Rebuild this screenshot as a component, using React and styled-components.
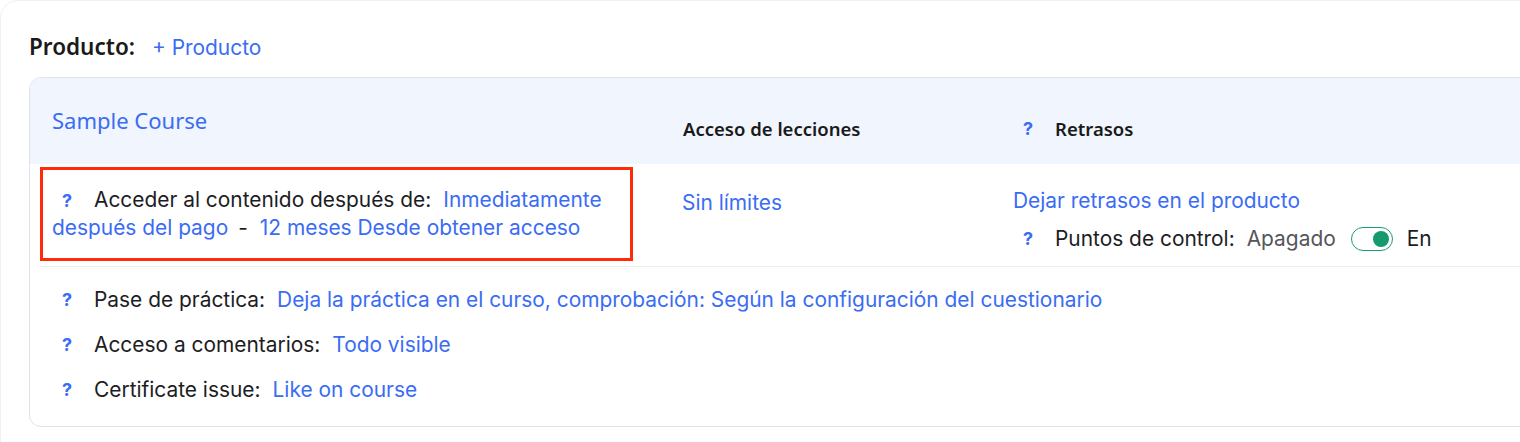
import React from "react";
import styled, { createGlobalStyle } from "styled-components";

const Global = createGlobalStyle`
  html, body { margin: 0; padding: 0; background: #fff; overflow: hidden; }
  body { font-family: Inter, "Noto Sans", sans-serif; color: #1d1d1f; }
`;

const BLUE = "#3a6cf4";
const TEXT_SIZE = 20.9;

const Frame = styled.div`
  width: 100%;
  height: 442px;
  overflow: hidden;
  box-sizing: border-box;
  border: 1px solid #f1f1f3;
  border-right: 0;
  border-bottom: 0;
  border-top-left-radius: 18px;
  padding: 30px 0 0 28px;
`;

const TitleRow = styled.div`
  display: flex;
  align-items: baseline;
  gap: 17px;
  height: 28px;
`;

const Title = styled.span`
  font-family: "Noto Sans", sans-serif;
  font-weight: 600;
  font-size: 22.5px;
  color: #1a1a1a;
`;

const Link = styled.span`
  color: ${BLUE};
  font-size: ${(p) => p.$size || TEXT_SIZE}px;
  cursor: pointer;
`;

const Card = styled.div`
  margin-top: 18px;
  width: 1540px;
  border: 1px solid #dfe2ef;
  border-radius: 12px;
  overflow: hidden;
`;

const Columns = styled.div`
  display: grid;
  grid-template-columns: 593px 380px 1fr;
  margin-left: 10px;
`;

const Header = styled(Columns)`
  background: #f0f5fe;
  margin-left: 0;
  padding-left: 10px;
  height: 86px;
`;

const HeaderCell = styled.div`
  display: flex;
  align-items: ${(p) => (p.$top ? "flex-start" : "center")};
  padding-top: ${(p) => (p.$top ? 28 : 15)}px;
  padding-left: ${(p) => p.$pad || 0}px;
  box-sizing: border-box;
`;

const CourseName = styled.span`
  font-family: "Noto Sans", sans-serif;
  font-size: 22px;
  color: ${BLUE};
  line-height: 28px;
`;

const ColHeading = styled.span`
  font-family: "Noto Sans", sans-serif;
  font-weight: 600;
  font-size: 18.5px;
  color: #1a1a1a;
`;

const HelpMark = styled.span`
  display: inline-block;
  width: 32px;
  padding-left: 10px;
  box-sizing: content-box;
  font-weight: 700;
  font-size: 18px;
  color: ${BLUE};
  flex-shrink: 0;
`;

const MainRow = styled(Columns)`
  padding: 3px 0 5px;
  border-bottom: 1px solid #ececef;
`;

const Highlight = styled.div`
  border: 3px solid #ff2a0c;
  height: 94px;
  box-sizing: border-box;
  padding: 16px 9px;
  font-size: ${TEXT_SIZE}px;
  line-height: 27px;
`;

const Label = styled.span`
  color: #1d1d1f;
  font-size: ${TEXT_SIZE}px;
  margin-right: 12px;
`;

const Sep = styled.span`
  margin: 0 12px 0 10px;
`;

const PlainCell = styled.div`
  padding-top: 22px;
  padding-left: 49px;
  font-size: ${TEXT_SIZE}px;
  line-height: 27px;
`;

const DelayCell = styled.div`
  display: flex;
  flex-direction: column;
  gap: 11px;
  padding-top: 20px;
  font-size: ${TEXT_SIZE}px;
  line-height: 27px;
`;

const InlineRow = styled.div`
  display: flex;
  align-items: center;
`;

const Muted = styled.span`
  color: #55565b;
  margin-right: 15px;
`;

const Toggle = styled.span`
  display: inline-flex;
  align-items: center;
  justify-content: flex-end;
  width: 42px;
  height: 24px;
  box-sizing: border-box;
  border: 1.5px solid #1e9c70;
  border-radius: 12px;
  padding: 0 3px;
  margin-right: 14px;
`;

const Knob = styled.span`
  width: 16px;
  height: 16px;
  border-radius: 50%;
  background: #159a6b;
`;

const SettingsList = styled.div`
  padding: 10px 0 14px 22px;
`;

const SettingRow = styled.div`
  display: flex;
  align-items: center;
  height: 45px;
  font-size: ${TEXT_SIZE}px;
`;

export default function App() {
  return (
    <>
      <Global />
      <Frame>
        <TitleRow>
          <Title>Producto:</Title>
          <Link>+ Producto</Link>
        </TitleRow>
        <Card>
          <Header>
            <HeaderCell $top $pad={12}>
              <CourseName>Sample Course</CourseName>
            </HeaderCell>
            <HeaderCell $pad={50}>
              <ColHeading>Acceso de lecciones</ColHeading>
            </HeaderCell>
            <HeaderCell>
              <HelpMark>?</HelpMark>
              <ColHeading>Retrasos</ColHeading>
            </HeaderCell>
          </Header>
          <MainRow>
            <Highlight>
              <HelpMark>?</HelpMark>
              <Label>Acceder al contenido después de:</Label>
              <Link>Inmediatamente después del pago</Link>
              <Sep>-</Sep>
              <Link>12 meses Desde obtener acceso</Link>
            </Highlight>
            <PlainCell>
              <Link>Sin límites</Link>
            </PlainCell>
            <DelayCell>
              <Link>Dejar retrasos en el producto</Link>
              <InlineRow>
                <HelpMark>?</HelpMark>
                <Label>Puntos de control:</Label>
                <Muted>Apagado</Muted>
                <Toggle>
                  <Knob />
                </Toggle>
                <span>En</span>
              </InlineRow>
            </DelayCell>
          </MainRow>
          <SettingsList>
            <SettingRow>
              <HelpMark>?</HelpMark>
              <Label>Pase de práctica:</Label>
              <Link>
                Deja la práctica en el curso, comprobación: Según la configuración del cuestionario
              </Link>
            </SettingRow>
            <SettingRow>
              <HelpMark>?</HelpMark>
              <Label>Acceso a comentarios:</Label>
              <Link>Todo visible</Link>
            </SettingRow>
            <SettingRow>
              <HelpMark>?</HelpMark>
              <Label>Certificate issue:</Label>
              <Link>Like on course</Link>
            </SettingRow>
          </SettingsList>
        </Card>
      </Frame>
    </>
  );
}
